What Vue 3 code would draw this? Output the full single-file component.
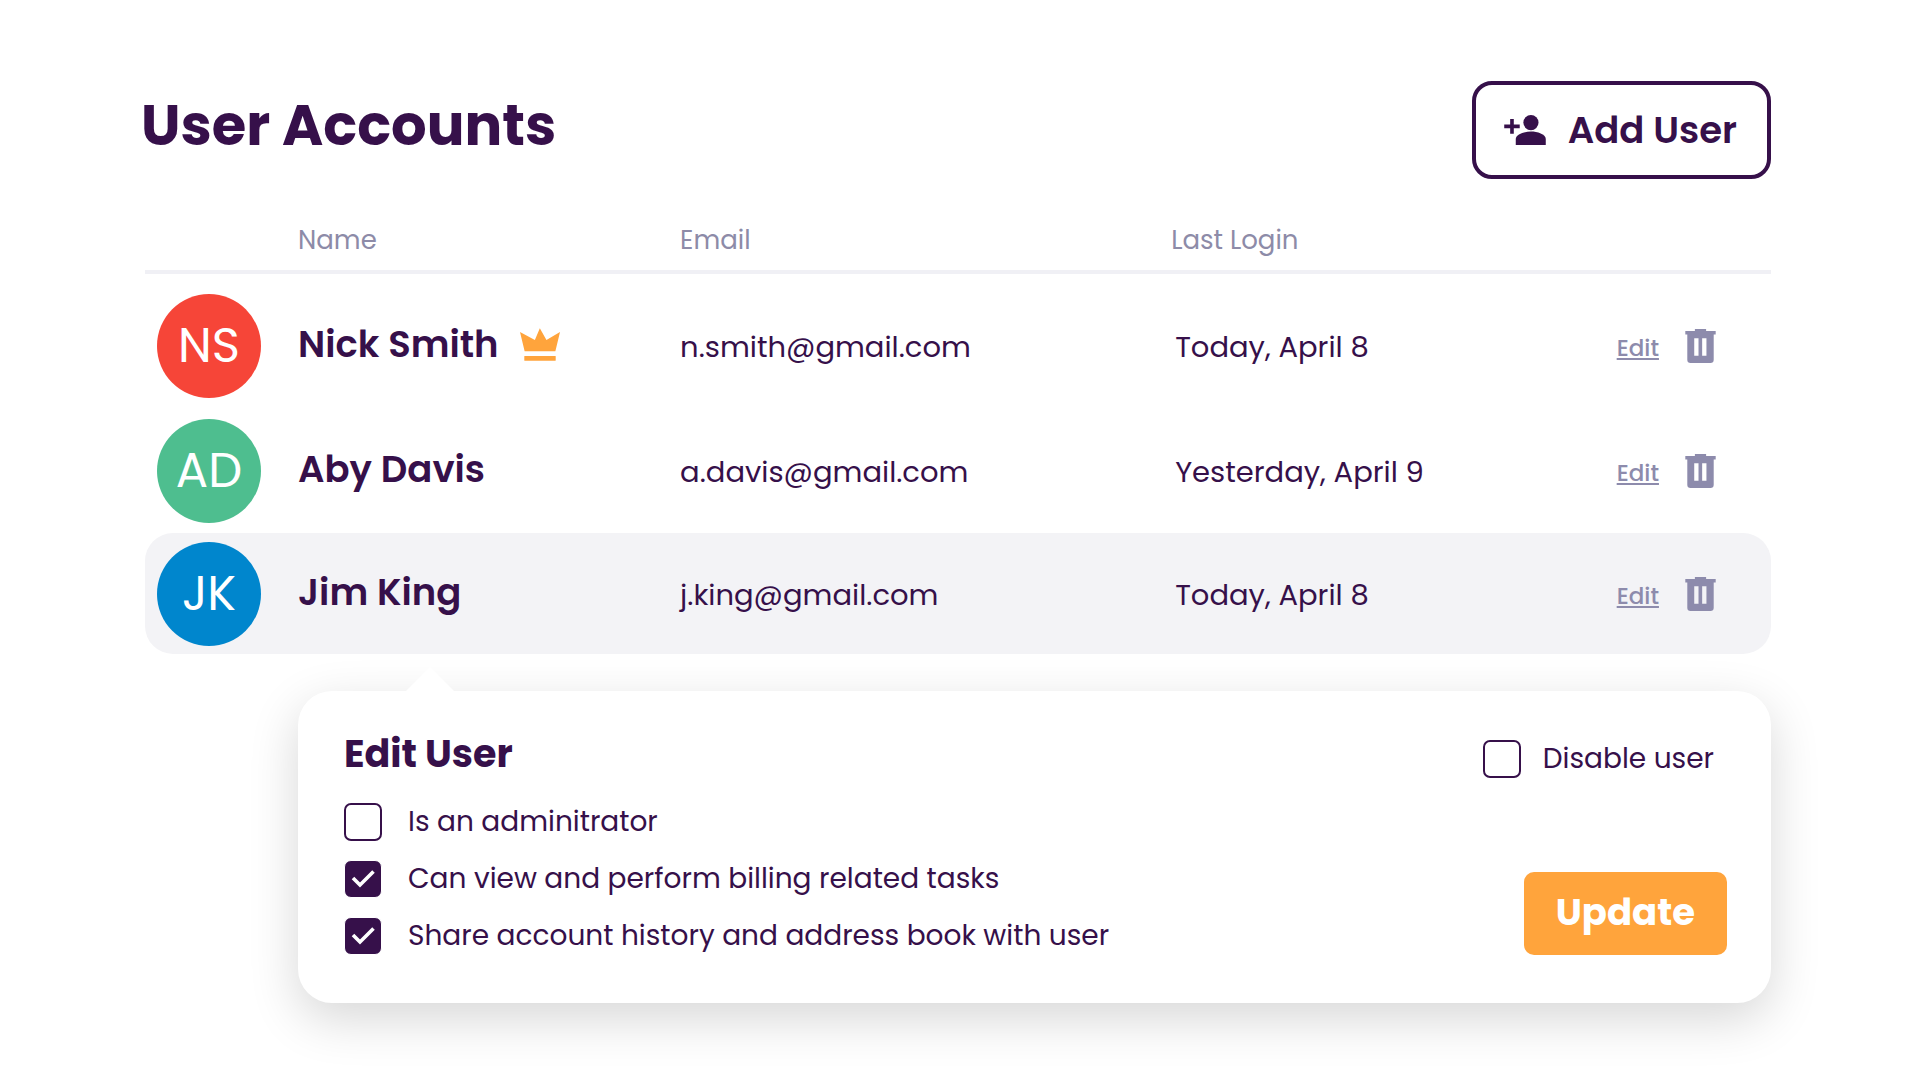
<template>
  <main class="accounts-page">
    <header class="page-header">
      <h1>User Accounts</h1>
      <button type="button" class="add-button">
        <svg class="add-icon" viewBox="0 0 126 91" aria-hidden="true">
          <path d="M18 12h11v17h18v11H29v17H18V40H0V29h18z" />
          <circle cx="81" cy="23" r="23" />
          <path d="M35 91V73C35 58 62 50 81 50s45 8 45 23v18z" />
        </svg>
        Add User
      </button>
    </header>

    <div class="content">
      <table class="user-table">
        <colgroup>
          <col class="col-avatar" />
          <col class="col-name" />
          <col class="col-email" />
          <col class="col-login" />
          <col />
        </colgroup>
        <thead>
          <tr>
            <th></th>
            <th>Name</th>
            <th>Email</th>
            <th>Last Login</th>
            <th></th>
          </tr>
        </thead>
        <tbody>
          <tr v-for="user in users" :key="user.id" :class="{ selected: user.id === selectedId }">
            <td class="avatar-cell">
              <span class="avatar" :class="user.color">{{ user.initials }}</span>
            </td>
            <td>
              <div class="name">
                {{ user.name }}
                <svg v-if="user.owner" class="crown" viewBox="0 0 121 99" aria-hidden="true">
                  <path d="M0 12l45 24L60 0l20 36 41-24-14 58H14z" />
                  <rect x="13" y="84" width="95" height="15" rx="2" />
                </svg>
              </div>
            </td>
            <td class="text-cell">{{ user.email }}</td>
            <td class="text-cell login-cell">{{ user.lastLogin }}</td>
            <td>
              <div class="actions">
                <a href="#" class="edit-link" @click.prevent="selectedId = user.id">Edit</a>
                <button type="button" class="delete-button" :aria-label="'Delete ' + user.name" @click="removeUser(user.id)">
                  <svg class="trash" viewBox="0 0 92 103" aria-hidden="true">
                    <path fill-rule="evenodd" d="M29 0h34v6h29v11h-6v76q0 10-10 10H16q-10 0-10-10V17H0V6h29zM27 28v53h13V28zM51 28v53h13V28z" />
                  </svg>
                </button>
              </div>
            </td>
          </tr>
        </tbody>
      </table>

      <form class="edit-card" @submit.prevent>
        <div class="card-left">
          <h2>Edit User</h2>
          <div class="options">
            <label v-for="option in options" :key="option.id" class="check">
              <input type="checkbox" v-model="option.checked" />
              <span>{{ option.label }}</span>
            </label>
          </div>
        </div>
        <div class="card-right">
          <label class="check disable">
            <input type="checkbox" v-model="disabled" />
            <span>Disable user</span>
          </label>
          <button type="submit" class="update-button">Update</button>
        </div>
      </form>
    </div>
  </main>
</template>

<script setup>
import { ref } from 'vue';

const users = ref([
  { id: 1, initials: 'NS', color: 'red', name: 'Nick Smith', owner: true, email: 'n.smith@gmail.com', lastLogin: 'Today, April 8' },
  { id: 2, initials: 'AD', color: 'green', name: 'Aby Davis', owner: false, email: 'a.davis@gmail.com', lastLogin: 'Yesterday, April 9' },
  { id: 3, initials: 'JK', color: 'blue', name: 'Jim King', owner: false, email: 'j.king@gmail.com', lastLogin: 'Today, April 8' }
]);

const selectedId = ref(3);
const disabled = ref(false);

const options = ref([
  { id: 'admin', label: 'Is an adminitrator', checked: false },
  { id: 'billing', label: 'Can view and perform billing related tasks', checked: true },
  { id: 'share', label: 'Share account history and address book with user', checked: true }
]);

const removeUser = (id) => {
  users.value = users.value.filter((user) => user.id !== id);
};
</script>

<style>
body {
  margin: 0;
  background: #fff;
}
</style>

<style scoped>
.accounts-page {
  padding: 81px 149px 64px 141px;
  color: #36104a;
  font-family: Poppins, Inter, sans-serif;
}

.page-header {
  display: flex;
  justify-content: space-between;
  align-items: flex-start;
}

.content {
  padding-left: 4px;
}

h1,
h2 {
  margin: 0;
  font-weight: 700;
}

h1 {
  font-size: 56px;
  line-height: 90px;
}

.add-button {
  display: flex;
  align-items: center;
  gap: 22px;
  height: 98px;
  padding: 0 30px 0 28px;
  border: 4px solid #36104a;
  border-radius: 20px;
  background: #fff;
  color: inherit;
  font: 600 37px Poppins, Inter, sans-serif;
  cursor: pointer;
}

.add-icon {
  width: 42px;
  height: 30px;
  fill: #36104a;
}

.user-table {
  width: 100%;
  margin-top: 28px;
  table-layout: fixed;
  border-collapse: separate;
  border-spacing: 0;
}

.col-avatar {
  width: 153px;
}

.col-name {
  width: 23.5%;
}

.col-email {
  width: 30.2%;
}

.col-login {
  width: 27.4%;
}

th,
td {
  box-sizing: border-box;
  padding: 0;
}

th {
  height: 67px;
  padding-top: 4px;
  border-bottom: 4px solid #f0f0f5;
  color: #8d8ba8;
  font-size: 26px;
  font-weight: 400;
  line-height: 59px;
  text-align: left;
}

tbody::before {
  content: '';
  display: block;
  height: 9px;
}

td {
  height: 125px;
}

.selected td {
  height: 121px;
  background: #f3f3f6;
}

.selected td:first-child {
  border-radius: 28px 0 0 28px;
}

.selected td:last-child {
  border-radius: 0 28px 28px 0;
}

td.avatar-cell {
  padding-left: 12px;
}

.avatar {
  display: flex;
  align-items: center;
  justify-content: center;
  width: 104px;
  height: 104px;
  border-radius: 50%;
  color: #fff;
  font-size: 48px;
}

.red {
  background: #f64538;
}

.green {
  background: #4ebe8f;
}

.blue {
  background: #0086cd;
}

.name {
  display: flex;
  align-items: center;
  gap: 21px;
  padding-bottom: 3px;
  font-size: 37px;
  font-weight: 600;
}

.crown {
  width: 40px;
  height: 33px;
  fill: #ffa43c;
}

td.text-cell {
  padding-top: 4px;
  font-size: 29px;
}

td.login-cell {
  padding-left: 4px;
}

.actions {
  display: flex;
  align-items: center;
  gap: 26px;
}

.edit-link {
  padding-top: 4px;
  color: #8d8bac;
  font-size: 23px;
  font-weight: 500;
  text-underline-offset: 2px;
}

.delete-button {
  display: flex;
  padding: 0;
  border: none;
  background: none;
  cursor: pointer;
}

.trash {
  width: 31px;
  height: 34px;
  fill: #8d8bac;
}

.edit-card {
  position: relative;
  display: flex;
  justify-content: space-between;
  margin: 37px 0 0 153px;
  padding: 41px 44px 48px 46px;
  border-radius: 34px;
  background: #fff;
  box-shadow: 0 16px 50px rgba(0, 0, 0, 0.16);
}

/* Pointer towards the selected row */
.edit-card::before {
  content: '';
  position: absolute;
  top: -24px;
  left: 107px;
  width: 50px;
  height: 25px;
  background: #fff;
  clip-path: polygon(50% 0, 100% 100%, 0 100%);
}

h2 {
  font-size: 38px;
  line-height: 44px;
}

.options {
  display: flex;
  flex-direction: column;
  gap: 19px;
  margin-top: 27px;
}

.check {
  display: flex;
  align-items: center;
  gap: 26px;
  font-size: 28px;
  line-height: 38px;
  cursor: pointer;
}

.check input {
  appearance: none;
  flex: none;
  width: 38px;
  height: 38px;
  margin: 0;
  border: 2px solid #36104a;
  border-radius: 7px;
  background: #fff;
}

.check input:checked {
  border: 1px solid #fff;
  background: #36104a url("data:image/svg+xml,%3Csvg xmlns='http://www.w3.org/2000/svg' viewBox='0 0 36 36'%3E%3Cpath d='M8 17l7 7L28.500 10.500' fill='none' stroke='white' stroke-width='3.600'/%3E%3C/svg%3E") center / 36px 36px no-repeat;
}

.card-right {
  display: flex;
  flex-direction: column;
  align-items: flex-end;
  justify-content: space-between;
}

.disable {
  gap: 22px;
  margin: 8px 13px 0 0;
}

.update-button {
  height: 83px;
  padding: 0 32px 4px;
  border: none;
  border-radius: 10px;
  background: #ffa43c;
  color: #fff;
  font: 700 37px Poppins, Inter, sans-serif;
  cursor: pointer;
}
</style>
